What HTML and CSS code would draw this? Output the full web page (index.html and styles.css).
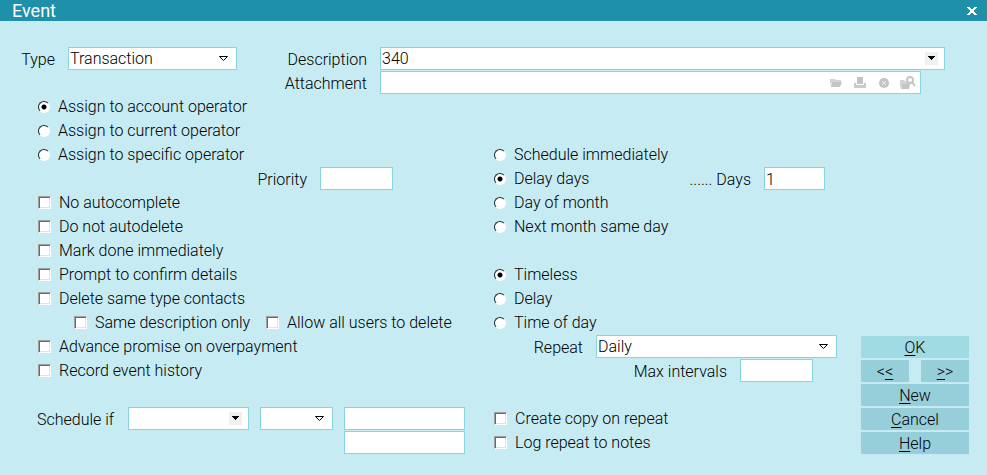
FILE: index.html
```html
<!DOCTYPE html>
<html lang="en">
<head>
    <meta charset="UTF-8">
    <meta name="viewport" content="width=device-width, initial-scale=1.0">
    <title>Event</title>
    <link rel="stylesheet" href="styles.css">
</head>
<body>
    <header class="title-bar">
        <h1>Event</h1>
        <button type="button" class="close" aria-label="Close">
            <svg width="10" height="8" viewBox="0 0 10 8" shape-rendering="crispEdges"><path d="M0 0h3v1h1v1h2V1h1V0h3v1H9v1H8v1H7v2h1v1h1v1h1v1H7V7H6V6H4v1H3v1H0V7h1V6h1V5h1V3H2V2H1V1H0z" fill="#fff"/></svg>
        </button>
    </header>

    <form class="event-form">
        <div class="top-fields">
            <label for="type">Type</label>
            <span class="combo">
                <select id="type"><option>Transaction</option></select>
                <svg class="arrow" width="11" height="7" viewBox="0 0 11 7"><path d="M1.500 1.500h8l-4 4z" fill="none" stroke="#000"/></svg>
            </span>
            <label for="description">Description</label>
            <span class="combo">
                <select id="description"><option>340</option></select>
                <svg class="arrow boxed" width="13" height="13" viewBox="0 0 13 13" shape-rendering="crispEdges"><path d="M0 0h13v13H0z" fill="#f0f0f0"/><path d="M3 4h7v1H9v1H8v1H7v1H6V7H5V6H4V5H3z"/></svg>
            </span>

            <label for="attachment" class="attachment-label">Attachment</label>
            <div class="attachment">
                <input type="text" id="attachment">
                <button type="button" aria-label="Open">
                    <svg width="16" height="16" viewBox="0 0 16 16"><path d="M2 4h5l1 1h5v2H4l-2 4z" fill="#d4d4d4"/><path d="M4 7h10l-2 5H3z" fill="#c4c4c4"/></svg>
                </button>
                <button type="button" aria-label="Print">
                    <svg width="16" height="16" viewBox="0 0 16 16"><path d="M5 2h6v7H5z" fill="#c4c4c4"/><path d="M2 8h2v2h8V8h2v5H2z" fill="#cacaca"/></svg>
                </button>
                <button type="button" aria-label="Remove">
                    <svg width="16" height="16" viewBox="0 0 16 16"><circle cx="8" cy="8" r="5" fill="#c4c4c4"/><path d="M6 6l4 4M10 6l-4 4" stroke="#eee" stroke-width="1"/></svg>
                </button>
                <button type="button" aria-label="Browse">
                    <svg width="16" height="16" viewBox="0 0 16 16"><path d="M0 5h4l1 1h3v3H3l-3 4z" fill="#d4d4d4"/><path d="M2 9h8l-1 5H1z" fill="#c4c4c4"/><circle cx="10" cy="5" r="3" fill="#fff" stroke="#c4c4c4" stroke-width="2"/><path d="M12 7l3 4" stroke="#c4c4c4" stroke-width="2"/></svg>
                </button>
            </div>
        </div>

        <div class="columns">
            <div class="left">
                <div class="row"><label class="choice"><input type="radio" name="assign" checked>Assign to account operator</label></div>
                <div class="row"><label class="choice"><input type="radio" name="assign">Assign to current operator</label></div>
                <div class="row"><label class="choice"><input type="radio" name="assign">Assign to specific operator</label></div>
                <div class="row">
                    <label for="priority" class="priority-label">Priority</label>
                    <input type="text" id="priority" class="short">
                </div>
                <div class="row"><label class="choice"><input type="checkbox">No autocomplete</label></div>
                <div class="row"><label class="choice"><input type="checkbox">Do not autodelete</label></div>
                <div class="row"><label class="choice"><input type="checkbox">Mark done immediately</label></div>
                <div class="row"><label class="choice"><input type="checkbox">Prompt to confirm details</label></div>
                <div class="row"><label class="choice"><input type="checkbox">Delete same type contacts</label></div>
                <div class="row indent">
                    <label class="choice same-description"><input type="checkbox">Same description only</label>
                    <label class="choice"><input type="checkbox">Allow all users to delete</label>
                </div>
                <div class="row"><label class="choice"><input type="checkbox">Advance promise on overpayment</label></div>
                <div class="row"><label class="choice"><input type="checkbox">Record event history</label></div>
                <div class="row blank"></div>
                <div class="schedule">
                    <label for="scheduleIf">Schedule if</label>
                    <span class="combo">
                        <select id="scheduleIf"><option></option></select>
                        <svg class="arrow boxed" width="13" height="13" viewBox="0 0 13 13" shape-rendering="crispEdges"><path d="M0 0h13v13H0z" fill="#f0f0f0"/><path d="M3 4h7v1H9v1H8v1H7v1H6V7H5V6H4V5H3z"/></svg>
                    </span>
                    <span class="combo">
                        <select aria-label="Comparison"><option></option></select>
                        <svg class="arrow" width="11" height="7" viewBox="0 0 11 7"><path d="M1.500 1.500h8l-4 4z" fill="none" stroke="#000"/></svg>
                    </span>
                    <input type="text" aria-label="First value">
                    <input type="text" aria-label="Second value" class="second-value">
                </div>
            </div>

            <div class="right">
                <div class="row blank"></div>
                <div class="row blank"></div>
                <div class="row"><label class="choice"><input type="radio" name="schedule">Schedule immediately</label></div>
                <div class="row">
                    <label class="choice"><input type="radio" name="schedule" checked>Delay days</label>
                    <label for="days" class="days-label">...... Days</label>
                    <input type="text" id="days" class="days" value="1">
                </div>
                <div class="row"><label class="choice"><input type="radio" name="schedule">Day of month</label></div>
                <div class="row"><label class="choice"><input type="radio" name="schedule">Next month same day</label></div>
                <div class="row blank"></div>
                <div class="row"><label class="choice"><input type="radio" name="time" checked>Timeless</label></div>
                <div class="row"><label class="choice"><input type="radio" name="time">Delay</label></div>
                <div class="row"><label class="choice"><input type="radio" name="time">Time of day</label></div>
                <div class="row repeat">
                    <label for="repeat">Repeat</label>
                    <span class="combo">
                        <select id="repeat"><option>Daily</option></select>
                        <svg class="arrow" width="11" height="7" viewBox="0 0 11 7"><path d="M1.500 1.500h8l-4 4z" fill="none" stroke="#000"/></svg>
                    </span>
                </div>
                <div class="row intervals">
                    <label for="intervals">Max intervals</label>
                    <input type="text" id="intervals" class="short">
                </div>
                <div class="row blank"></div>
                <div class="row"><label class="choice"><input type="checkbox">Create copy on repeat</label></div>
                <div class="row"><label class="choice"><input type="checkbox">Log repeat to notes</label></div>
            </div>

            <div class="buttons">
                <button type="submit" class="ok"><u>O</u>K</button>
                <div class="nav">
                    <button type="button">&lt;<u>&lt;</u></button>
                    <button type="button"><u>&gt;</u>&gt;</button>
                </div>
                <button type="button"><u>N</u>ew</button>
                <button type="button"><u>C</u>ancel</button>
                <button type="button"><u>H</u>elp</button>
            </div>
        </div>
    </form>
</body>
</html>
```
FILE: styles.css
```css
* {
    box-sizing: border-box;
}
body {
    margin: 0;
    background-color: #c6ebf2;
    color: #000;
    font-family: Roboto, sans-serif;
    font-size: 16px;
    font-weight: 300;
    line-height: 26px;
}
input,
select,
button {
    font: inherit;
    color: inherit;
    margin: 0;
    border-radius: 0;
}
label {
    white-space: nowrap;
}

/* Title bar */
.title-bar {
    display: flex;
    justify-content: space-between;
    align-items: center;
    height: 21px;
    padding: 0 10px 0 12px;
    background-color: #1e90aa;
    color: #fff;
}
.title-bar h1 {
    margin: 0;
    font-size: 18px;
    font-weight: 400;
    line-height: 18px;
}
.close {
    display: flex;
    padding: 0;
    border: none;
    background: none;
}

/* Fields */
input[type="text"],
select {
    width: 100%;
    height: 23px;
    padding: 1px 1px 0;
    border: 1px solid #8ad4de;
    background-color: #fff;
    line-height: 20px;
}
select {
    display: block;
    appearance: none;
}
.combo {
    position: relative;
    display: block;
}
.arrow {
    position: absolute;
    top: 8px;
    right: 8px;
    pointer-events: none;
}
.arrow.boxed {
    top: 5px;
    right: 7px;
}
.top-fields {
    display: grid;
    grid-template-columns: 35px 169px 117px 1fr;
    grid-auto-rows: 24px;
    column-gap: 13px;
    padding: 26px 42px 0 20px;
}
.top-fields label {
    text-align: right;
}
.attachment-label {
    grid-column: 3;
}
.attachment {
    display: flex;
    align-items: center;
    gap: 8px;
    height: 23px;
    margin-right: 24px;
    padding-right: 4px;
    border: 1px solid #8ad4de;
    background-color: #fff;
}
.attachment input[type="text"] {
    flex: 1;
    height: 21px;
    border: none;
}
.attachment button {
    display: flex;
    padding: 0;
    border: none;
    background: none;
}

/* Columns */
.columns {
    display: grid;
    grid-template-columns: 457fr 367fr 108px;
    padding: 0 18px 20px 37px;
}
.row {
    display: flex;
    align-items: flex-start;
    height: 24px;
}
.choice {
    display: flex;
    align-items: center;
    gap: 8px;
    line-height: 23px;
}
.left .choice {
    padding-left: 1px;
}
.indent {
    padding-left: 36px;
}
.same-description {
    width: 192px;
}
.priority-label {
    width: 270px;
    text-align: right;
}
.row .short {
    width: 73px;
    margin-left: 13px;
}
.days-label {
    margin-left: auto;
}
.row .days {
    width: 61px;
    margin: 0 36px 0 13px;
}
.repeat {
    gap: 13px;
    padding-right: 24px;
}
.repeat label {
    width: 89px;
    text-align: right;
}
.repeat .combo {
    flex: 1;
}
.intervals {
    justify-content: flex-end;
    padding-right: 48px;
}
.schedule {
    display: grid;
    grid-template-columns: 80px 121px 73px 121px;
    grid-auto-rows: 24px;
    column-gap: 11px;
}
.second-value {
    grid-column: 4;
}

/* Radios and tick boxes */
input[type="radio"],
input[type="checkbox"] {
    flex: none;
    appearance: none;
    background-color: #fff;
}
input[type="radio"] {
    width: 12px;
    height: 12px;
    border: 1px solid;
    border-color: #222 #fff #fff #222;
    border-radius: 50%;
}
input[type="radio"]:checked {
    background-image: radial-gradient(circle, #000 2px, transparent 3px);
}
input[type="checkbox"] {
    width: 13px;
    height: 13px;
    border: 1px solid;
    border-color: #a0a0a0 #fff #fff #a0a0a0;
    box-shadow: inset 1px 1px #696969, inset -1px -1px #e3e3e3;
}

/* Buttons */
.buttons {
    align-self: end;
    display: grid;
    grid-auto-rows: 22px;
    gap: 2px;
    padding-bottom: 1px;
}
.buttons button {
    width: 100%;
    height: 22px;
    padding: 2px 0 0;
    border: none;
    background-color: #96ced9;
    line-height: 20px;
}
.buttons .ok {
    background-color: #a0dae2;
}
.nav {
    display: flex;
    gap: 12px;
}
u {
    text-underline-offset: 2px;
}
```
